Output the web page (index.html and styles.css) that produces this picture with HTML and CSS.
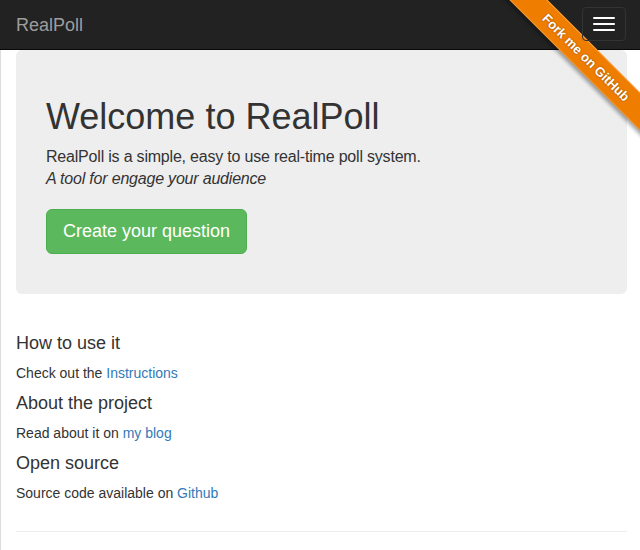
FILE: index.html
```html
<!DOCTYPE html>
<html lang="en">
<head>
    <meta charset="UTF-8">
    <title>RealPoll</title>
    <link rel="stylesheet" href="styles.css">
</head>
<body>
    <nav class="navbar">
        <a class="brand" href="#">RealPoll</a>
        <button class="toggle" type="button">
            <span class="bar"></span>
            <span class="bar"></span>
            <span class="bar"></span>
        </button>
    </nav>

    <div class="ribbon-wrap">
        <a class="ribbon" href="#">Fork me on GitHub</a>
    </div>

    <div class="page">
        <div class="jumbotron">
            <h1>Welcome to RealPoll</h1>
            <p>RealPoll is a simple, easy to use real-time poll system.<br>
            <em>A tool for engage your audience</em></p>
            <a class="btn-create" href="#">Create your question</a>
        </div>

        <div class="info">
            <h4>How to use it</h4>
            <p>Check out the <a href="#">Instructions</a></p>
            <h4>About the project</h4>
            <p>Read about it on <a href="#">my blog</a></p>
            <h4>Open source</h4>
            <p>Source code available on <a href="#">Github</a></p>
        </div>

        <hr>
    </div>
</body>
</html>
```

FILE: styles.css
```css
body {
    margin: 0;
    padding: 0;
    font-family: "Liberation Sans", Arial, sans-serif;
    font-size: 14px;
    line-height: 1.42857;
    color: #333;
    background: #fff;
}
a {
    color: #337ab7;
    text-decoration: none;
}
.navbar {
    display: flex;
    justify-content: space-between;
    align-items: flex-start;
    height: 49px;
    background: #222;
    border-bottom: 1px solid #080808;
}
.brand {
    padding: 15px 16px;
    font-size: 18px;
    line-height: 20px;
    color: #9d9d9d;
}
.toggle {
    position: relative;
    z-index: 2;
    display: flex;
    flex-direction: column;
    gap: 4px;
    margin: 7px 14px 0 0;
    padding: 9px 10px;
    background: transparent;
    border: 1px solid #333;
    border-radius: 4px;
}
.toggle .bar {
    display: block;
    width: 22px;
    height: 2px;
    border-radius: 1px;
    background: #fff;
}
.ribbon-wrap {
    position: absolute;
    top: 0;
    right: 0;
    width: 150px;
    height: 150px;
    overflow: hidden;
    z-index: 1;
    pointer-events: none;
}
.ribbon {
    position: absolute;
    left: -24px;
    top: 44px;
    width: 240px;
    height: 27px;
    line-height: 25px;
    box-sizing: border-box;
    text-align: center;
    font-family: "Liberation Sans", Arial, sans-serif;
    font-size: 13px;
    font-weight: bold;
    color: #fff;
    background: #ef7d00;
    border-top: 1px solid #f5a24a;
    border-bottom: 1px solid #f39a3a;
    text-shadow: 0 0 2px rgba(0, 0, 0, 0.45);
    box-shadow: 0 3px 4px rgba(0, 0, 0, 0.35);
    transform: rotate(45deg);
    pointer-events: auto;
}
.page {
    border-left: 1px solid #ddd;
    padding: 0 13px 20px 15px;
}
.jumbotron {
    padding: 47px 30px 40px;
    margin-bottom: 40px;
    background: #eee;
    border-radius: 6px;
}
.jumbotron h1 {
    margin: 0 0 9px;
    font-size: 36px;
    font-weight: normal;
    line-height: 1.1;
}
.jumbotron p {
    margin: 0 0 18px;
    font-size: 16px;
    letter-spacing: -0.2px;
}
.btn-create {
    display: inline-block;
    padding: 10px 16px;
    font-size: 18px;
    line-height: 23px;
    color: #fff;
    background: #5cb85c;
    border: 1px solid #4cae4c;
    border-radius: 6px;
}
.info h4 {
    margin: 10px 0;
    font-size: 18px;
    font-weight: normal;
    line-height: 1.1;
}
.info p {
    margin: 0 0 10px;
}
hr {
    margin: 27px 0 0;
    border: 0;
    border-top: 1px solid #eee;
}
```
